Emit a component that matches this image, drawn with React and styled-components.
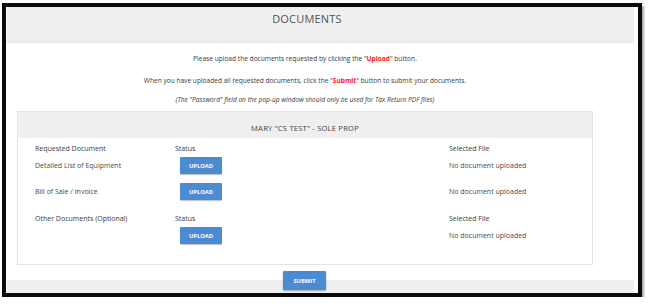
import styled, { createGlobalStyle } from "styled-components";

const GlobalStyle = createGlobalStyle`
  body {
    margin: 0;
    background: #ffffff;
    font-family: "Open Sans", "Liberation Sans", sans-serif;
  }
`;

const Frame = styled.div`
  box-sizing: border-box;
  width: 640px;
  height: 294px;
  margin: 3px 0 0 2px;
  border: 4px solid #0a0a0a;
  box-shadow: 2px 3px 2px rgba(0, 0, 0, 0.35);
  padding: 0 4px 0 1px;
  background: #ffffff;
  display: flex;
  flex-direction: column;
`;

const Header = styled.div`
  height: 36px;
  background: #efefef;
  border-bottom: 1px solid #e6e6e6;
  box-sizing: border-box;
  padding-top: 5px;
  padding-right: 27px;
  text-align: center;
  font-size: 11px;
  line-height: 13px;
  color: #555555;
  letter-spacing: 0.2px;
`;

const Body = styled.div`
  padding: 0 41px 0 10px;
  flex: 1;
  display: flex;
  flex-direction: column;
`;

const Intro = styled.p`
  margin: ${(p) => p.$top}px 0 0;
  text-align: center;
  font-size: 6.6px;
  line-height: 10px;
  color: #3a3a3a;
  font-style: ${(p) => (p.$italic ? "italic" : "normal")};
`;

const Hot = styled.span`
  color: #ff1a1a;
  font-weight: 700;
`;

const Card = styled.div`
  margin-top: 6px;
  border: 1px solid #e4e4e4;
  box-sizing: border-box;
  height: 154px;
`;

const CardTitle = styled.div`
  height: 26px;
  box-sizing: border-box;
  padding-top: 11px;
  background: #efefef;
  text-align: center;
  font-size: 7.6px;
  line-height: 10px;
  color: #444444;
  letter-spacing: 0.2px;
`;

const Table = styled.div`
  padding: 1px 0 0 17px;
`;

const Row = styled.div`
  display: grid;
  grid-template-columns: 140px 274px 1fr;
  align-items: center;
  height: ${(p) => (p.$head ? 18 : 17)}px;
  margin-bottom: ${(p) => (p.$head ? 0 : 9)}px;
  font-size: 7px;
  color: ${(p) => (p.$head ? "#3a3a3a" : "#4a4a4a")};
`;

const UploadButton = styled.button`
  width: 42px;
  height: 17px;
  margin-left: 5px;
  padding: 0;
  border: none;
  border-radius: 1px;
  background: #4a8cd3;
  box-shadow: 0 1px 1px rgba(0, 0, 0, 0.25);
  color: #ffffff;
  font-family: "Open Sans", "Liberation Sans", sans-serif;
  font-size: 5.8px;
  font-weight: 700;
`;

const Footer = styled.div`
  height: 27px;
  box-sizing: border-box;
  padding: 5px 32px 0 0;
  background: linear-gradient(to bottom, #ffffff 14px, #efefef 14px);
  display: flex;
  justify-content: center;
`;

const SubmitButton = styled.button`
  width: 43px;
  height: 19px;
  padding: 0;
  border: none;
  border-radius: 1px;
  background: #4a8cd3;
  box-shadow: 0 1px 2px rgba(0, 0, 0, 0.3);
  color: #ffffff;
  font-family: "Open Sans", "Liberation Sans", sans-serif;
  font-size: 5.8px;
  font-weight: 700;
`;

const docs = [
  { name: "Detailed List of Equipment" },
  { name: "Bill of Sale / Invoice" },
];

export default function App() {
  return (
    <>
      <GlobalStyle />
      <Frame>
        <Header>DOCUMENTS</Header>
        <Body>
          <Intro $top={11}>
            Please upload the documents requested by clicking the "<Hot>Upload</Hot>" button.
          </Intro>
          <Intro $top={12}>
            When you have uploaded all requested documents, click the "<Hot>Submit</Hot>" button to
            submit your documents.
          </Intro>
          <Intro $top={9} $italic>
            (The "Password" field on the pop-up window should only be used for Tax Return PDF files)
          </Intro>
          <Card>
            <CardTitle>MARY "CS TEST" - SOLE PROP</CardTitle>
            <Table>
              <Row $head>
                <span>Requested Document</span>
                <span>Status</span>
                <span>Selected File</span>
              </Row>
              {docs.map((d) => (
                <Row key={d.name}>
                  <span>{d.name}</span>
                  <div>
                    <UploadButton>UPLOAD</UploadButton>
                  </div>
                  <span>No document uploaded</span>
                </Row>
              ))}
              <Row $head>
                <span>Other Documents (Optional)</span>
                <span>Status</span>
                <span>Selected File</span>
              </Row>
              <Row>
                <span></span>
                <div>
                  <UploadButton>UPLOAD</UploadButton>
                </div>
                <span>No document uploaded</span>
              </Row>
            </Table>
          </Card>
        </Body>
        <Footer>
          <SubmitButton>SUBMIT</SubmitButton>
        </Footer>
      </Frame>
    </>
  );
}
